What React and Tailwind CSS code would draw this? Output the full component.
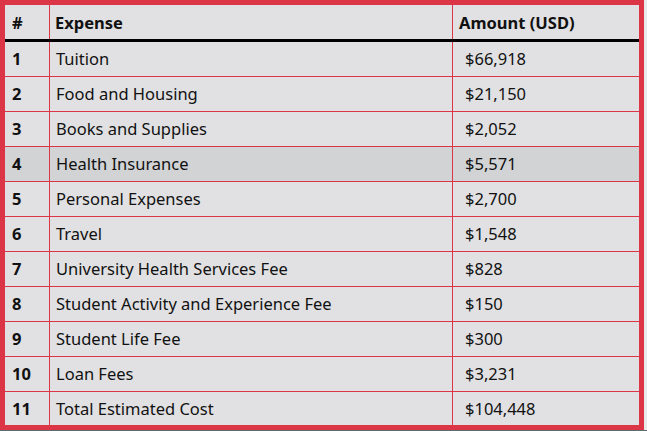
import React from "react";

const rows = [
  ["1", "Tuition", "$66,918"],
  ["2", "Food and Housing", "$21,150"],
  ["3", "Books and Supplies", "$2,052"],
  ["4", "Health Insurance", "$5,571"],
  ["5", "Personal Expenses", "$2,700"],
  ["6", "Travel", "$1,548"],
  ["7", "University Health Services Fee", "$828"],
  ["8", "Student Activity and Experience Fee", "$150"],
  ["9", "Student Life Fee", "$300"],
  ["10", "Loan Fees", "$3,231"],
  ["11", "Total Estimated Cost", "$104,448"],
];

export default function App() {
  return (
    <div className="w-[647px] h-[431px] flex flex-col bg-[#e9e9ea] font-['Noto_Sans',sans-serif] text-[16.5px] text-[#111]">
      <div className="flex">
        <div className="w-[644px] h-[430px] border-[5px] border-[#dc3545] bg-[#e1e1e3] overflow-hidden">
          {/* header */}
          <div className="grid grid-cols-[45px_403px_1fr] h-[37px] border-b-[3px] border-black font-bold">
            <div className="flex items-center pl-[7px] pt-[3px] border-r border-[#dc3545]">#</div>
            <div className="flex items-center pl-[5px] pt-[3px] border-r border-[#dc3545]">Expense</div>
            <div className="flex items-center pl-[6px] pt-[3px]">Amount (USD)</div>
          </div>
          {rows.map((r, i) => (
            <div
              key={r[0]}
              className={`grid grid-cols-[45px_403px_1fr] h-[35px] border-b border-[#dc3545] ${i === 3 ? "bg-[#d2d3d5]" : ""}`}
            >
              <div className="flex items-center font-bold pl-[7px] border-r border-[#dc3545]">{r[0]}</div>
              <div className="flex items-center pl-[6px] border-r border-[#dc3545]">{r[1]}</div>
              <div className="flex items-center pl-[12px]">{r[2]}</div>
            </div>
          ))}
        </div>
      </div>
      <div className="flex-1 bg-[#5b6d72]"></div>
    </div>
  );
}
